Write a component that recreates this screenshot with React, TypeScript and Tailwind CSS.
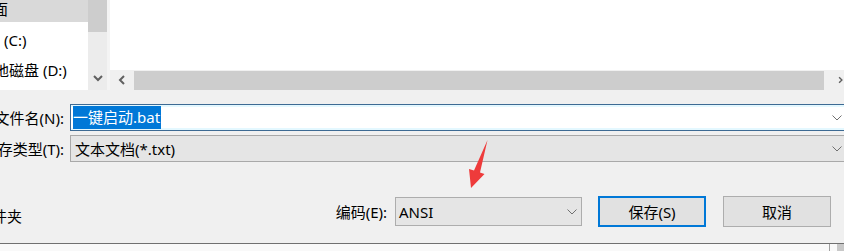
import React from "react";

const FONT = "font-['Noto_Sans','Noto_Sans_CJK_SC',sans-serif]";

function ThinChevron() {
  return (
    <svg width="10" height="6" viewBox="0 0 10 6" aria-hidden="true">
      <polyline points="0.5,0.5 5,5 9.5,0.5" fill="none" stroke="#707070" strokeWidth="1" />
    </svg>
  );
}

function ScrollArrow({ dir }: { dir: "down" | "left" | "right" }) {
  const pts =
    dir === "down" ? "1,2 5,6 9,2" : dir === "left" ? "6,1 2,5 6,9" : "3,1 7,5 3,9";
  return (
    <svg width="10" height="10" viewBox="0 0 10 10" aria-hidden="true">
      <polyline points={pts} fill="none" stroke="#606060" strokeWidth="2" />
    </svg>
  );
}

function Label({ children }: { children: React.ReactNode }) {
  return (
    <div className="flex w-[64px] shrink-0 justify-end whitespace-nowrap text-[15px] leading-[20px] text-black">
      {children}
    </div>
  );
}

export default function App() {
  return (
    <div className={`relative flex h-[251px] w-[844px] flex-col overflow-hidden bg-[#f0f0f0] ${FONT}`}>
      {/* browser panes */}
      <div className="flex h-[90px] shrink-0">
        <div className="flex w-[88px] flex-col overflow-hidden bg-white text-[15px] text-black">
          <div className="flex h-[22px] items-center whitespace-nowrap bg-[#d9d9d9] pb-[4px]">
            <span className="ml-[-22px] leading-[18px]">桌面</span>
          </div>
          <div className="mt-[3px] flex h-[30px] items-center whitespace-nowrap">
            <span className="ml-[4px] leading-[18px]">(C:)</span>
          </div>
          <div className="flex h-[30px] items-center whitespace-nowrap">
            <span className="ml-[-21px] leading-[18px]">本地磁盘 (D:)</span>
          </div>
        </div>
        <div className="flex w-[19px] flex-col bg-[#ececec]">
          <div className="h-[32px] bg-[#cdcdcd]" />
          <div className="flex-1" />
          <div className="flex h-[22px] items-start justify-center pt-[6px]">
            <ScrollArrow dir="down" />
          </div>
        </div>
        <div className="w-[3px] bg-[#f4f4f4]" />
        <div className="flex flex-1 flex-col bg-white">
          <div className="flex-1" />
          <div className="flex h-[20px] bg-[#f0f0f0]">
            <div className="flex w-[24px] items-center justify-center pl-[2px]">
              <ScrollArrow dir="left" />
            </div>
            <div className="mt-[1px] flex-1 bg-[#cdcdcd]" />
            <div className="flex w-[20px] items-center pl-[13px]">
              <ScrollArrow dir="right" />
            </div>
          </div>
        </div>
      </div>

      {/* file name */}
      <div className="mt-[14px] flex h-[27px] items-center">
        <Label>文件名(N):</Label>
        <div className="ml-[6px] flex h-[27px] flex-1 items-center border border-r-0 border-[#3d6a93] bg-white pl-[2px] pr-[2px] shadow-[inset_0_2px_0_#e4f8ff,inset_0_-2px_0_#e4f8ff]">
          <span className="inline-block h-[23px] bg-[#0078d7] pr-[1px] text-[15px] leading-[23px] text-white">
            一键启动.bat
          </span>
          <div className="flex-1" />
          <ThinChevron />
        </div>
      </div>

      {/* file type */}
      <div className="mt-[4px] flex h-[27px] items-center">
        <Label>保存类型(T):</Label>
        <div className="ml-[6px] flex h-[27px] flex-1 items-center border border-r-0 border-[#a9a9a9] bg-[#e5e5e5] pl-[4px] pr-[2px]">
          <span className="text-[15px] leading-[20px] text-black">文本文档(*.txt)</span>
          <div className="flex-1" />
          <ThinChevron />
        </div>
      </div>

      {/* bottom row */}
      <div className="mt-[34px] flex h-[31px] items-center pr-[13px] text-[15px] text-black">
        <div className="flex w-[22px] shrink-0 justify-end whitespace-nowrap pt-[9px] leading-[20px]">
          隐藏文件夹
        </div>
        <div className="flex-1" />
        <span className="leading-[20px]">编码(E):</span>
        <div className="ml-[8px] flex h-[29px] w-[187px] items-center border border-[#adadad] bg-[#e5e5e5] pl-[3px] pr-[4px]">
          <span className="leading-[20px]">ANSI</span>
          <div className="flex-1" />
          <ThinChevron />
        </div>
        <button className="ml-[16px] flex h-[31px] w-[108px] items-center justify-center border-2 border-[#0078d7] bg-[#e1e1e1] leading-[20px]">
          保存(S)
        </button>
        <button className="ml-[17px] flex h-[31px] w-[108px] items-center justify-center border border-[#adadad] bg-[#e1e1e1] leading-[20px]">
          取消
        </button>
      </div>

      {/* bottom edge */}
      <div className="mt-auto flex h-[8px] border-t border-[#707070] bg-[#f9f9f9]">
        <div className="flex-1" />
        <div className="w-[1px] bg-[#a0a0a0]" />
        <div className="w-[7px]" />
        <div className="w-[7px] bg-[#c8c8c8]" />
      </div>

      {/* red annotation arrow */}
      <svg
        className="absolute left-[460px] top-[136px]"
        width="36"
        height="58"
        viewBox="0 0 36 58"
        aria-hidden="true"
      >
        <polygon
          points="27.5,4 20,36.5 24.5,38 11,52 9,33 14,34.5"
          fill="#ee3b3b"
        />
      </svg>
    </div>
  );
}
